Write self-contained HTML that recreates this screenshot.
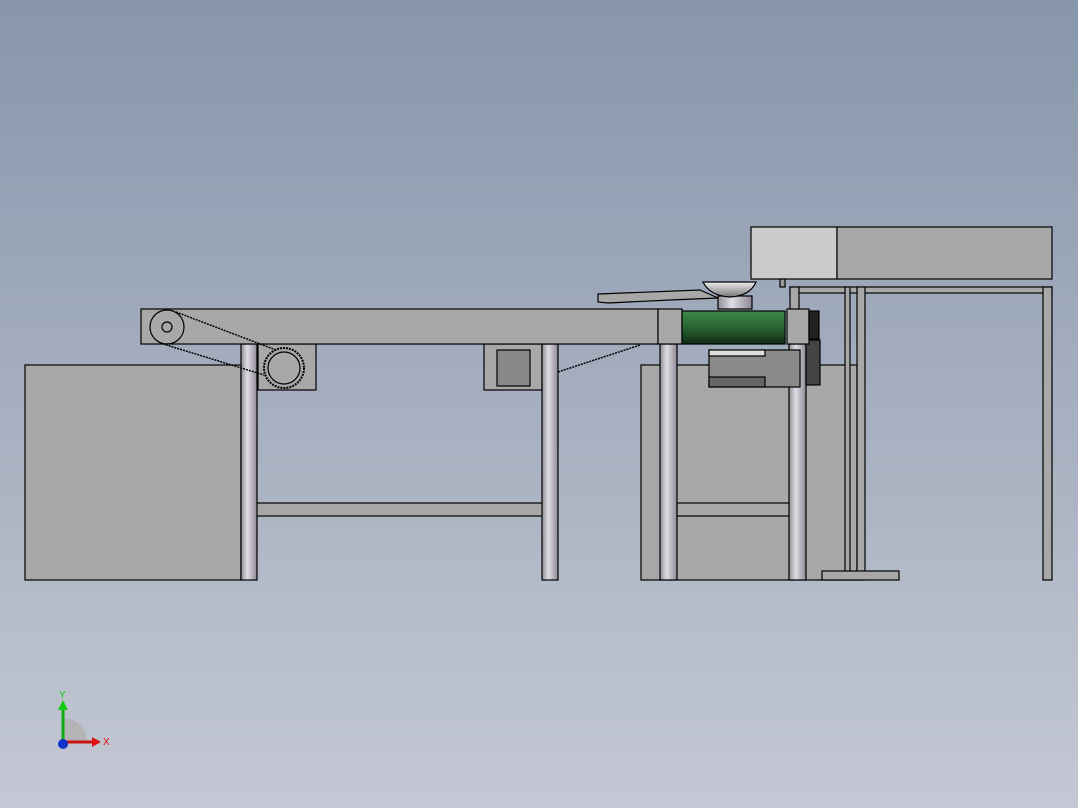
<!DOCTYPE html><html><head><style>body{margin:0}svg{display:block}</style></head><body>
<svg width="1078" height="808" viewBox="0 0 1078 808" xmlns="http://www.w3.org/2000/svg">
<defs>
<linearGradient id="bg" x1="0" y1="0" x2="0" y2="1"><stop offset="0" stop-color="#8796ab"/><stop offset="1" stop-color="#c4c8d4"/></linearGradient>
<linearGradient id="leg" x1="0" y1="0" x2="1" y2="0"><stop offset="0" stop-color="#8f8f96"/><stop offset=".4" stop-color="#e0dde4"/><stop offset="1" stop-color="#8e8896"/></linearGradient>
<linearGradient id="gr" x1="0" y1="0" x2="0" y2="1"><stop offset="0" stop-color="#3d8a48"/><stop offset=".5" stop-color="#2a6432"/><stop offset="1" stop-color="#0f2a14"/></linearGradient>
<linearGradient id="bowl" x1="0" y1="0" x2="0" y2="1"><stop offset="0" stop-color="#eee"/><stop offset="1" stop-color="#777"/></linearGradient>
</defs>
<rect width="1078" height="808" fill="url(#bg)"/>
<g stroke="#000" stroke-width="1.2">
<rect x="25" y="365" width="216" height="215" fill="#a8a8a8"/>
<rect x="641" y="365" width="216" height="215" fill="#a8a8a8"/>
<rect x="751" y="227" width="86" height="52" fill="#cbcbcb"/>
<rect x="837" y="227" width="215" height="52" fill="#a8a8a8"/>
<rect x="780" y="279" width="5" height="8" fill="#999"/>
<rect x="790" y="287" width="262" height="6" fill="#a8a8a8"/>
<rect x="790" y="287" width="9" height="30" fill="#a8a8a8"/>
<rect x="845" y="287" width="5" height="293" fill="#a8a8a8"/>
<rect x="857" y="287" width="8" height="293" fill="#a8a8a8"/>
<rect x="1043" y="287" width="9" height="293" fill="#a8a8a8"/>
<rect x="822" y="571" width="77" height="9" fill="#a8a8a8"/>
<rect x="258" y="344" width="58" height="46" fill="#a8a8a8"/>
<rect x="484" y="344" width="58" height="46" fill="#a8a8a8"/>
<rect x="497" y="350" width="33" height="36" fill="#888"/>
<rect x="256" y="503" width="288" height="13" fill="#a8a8a8"/>
<rect x="677" y="503" width="115" height="13" fill="#a8a8a8"/>
<rect x="241" y="344" width="16" height="236" fill="url(#leg)"/>
<rect x="542" y="344" width="16" height="236" fill="url(#leg)"/>
<rect x="660" y="344" width="17" height="236" fill="url(#leg)"/>
<rect x="789" y="344" width="17" height="236" fill="url(#leg)"/>
<rect x="709" y="350" width="91" height="37" fill="#8a8a8a"/>
<rect x="709" y="350" width="56" height="6" fill="#ddd"/>
<rect x="709" y="377" width="56" height="10" fill="#666"/>
<rect x="806" y="340" width="14" height="45" fill="#444"/>
<rect x="141" y="309" width="517" height="35" fill="#a8a8a8"/>
<rect x="658" y="309" width="24" height="35" fill="#a8a8a8"/>
<rect x="682" y="311" width="103" height="33" fill="url(#gr)"/>
<rect x="787" y="309" width="22" height="35" fill="#a8a8a8"/>
<rect x="809" y="311" width="10" height="28" fill="#222"/>
<path d="M598 294 L700 290 L718 298 L670 300 L608 303 L598 302 Z" fill="#a8a8a8"/>
<rect x="718" y="296" width="34" height="13" fill="url(#leg)"/>
<path d="M703 282 L756 282 Q750 296 730 297 Q710 296 703 282 Z" fill="url(#bowl)"/>
<circle cx="167" cy="327" r="17" fill="none"/>
<circle cx="167" cy="327" r="5" fill="none"/>
<circle cx="284" cy="368" r="20" fill="none" stroke-dasharray="2 1" stroke-width="2"/>
<circle cx="284" cy="368" r="16" fill="none"/>
<path d="M176 312 L276 350 M160 343 L264 375 M558 372 L640 345" fill="none" stroke-dasharray="2 1" stroke-width="1.5"/>
</g>
<g font-family="Liberation Sans, sans-serif" font-size="10">
<path d="M63 742 L63 718 A24 24 0 0 1 87 742 Z" fill="#b4b4b4"/>
<line x1="63" y1="742" x2="63" y2="708" stroke="#1a1" stroke-width="3"/><path d="M58 710 L63 700 L68 710Z" fill="#1c1"/>
<line x1="63" y1="742" x2="93" y2="742" stroke="#c11" stroke-width="3"/><path d="M92 737 L101 742 L92 747Z" fill="#d11"/>
<circle cx="63" cy="744" r="5" fill="#1133cc"/>
<text x="59" y="698" fill="#1c1">Y</text><text x="103" y="745" fill="#d11">X</text>
</g>
</svg>
</body></html>
